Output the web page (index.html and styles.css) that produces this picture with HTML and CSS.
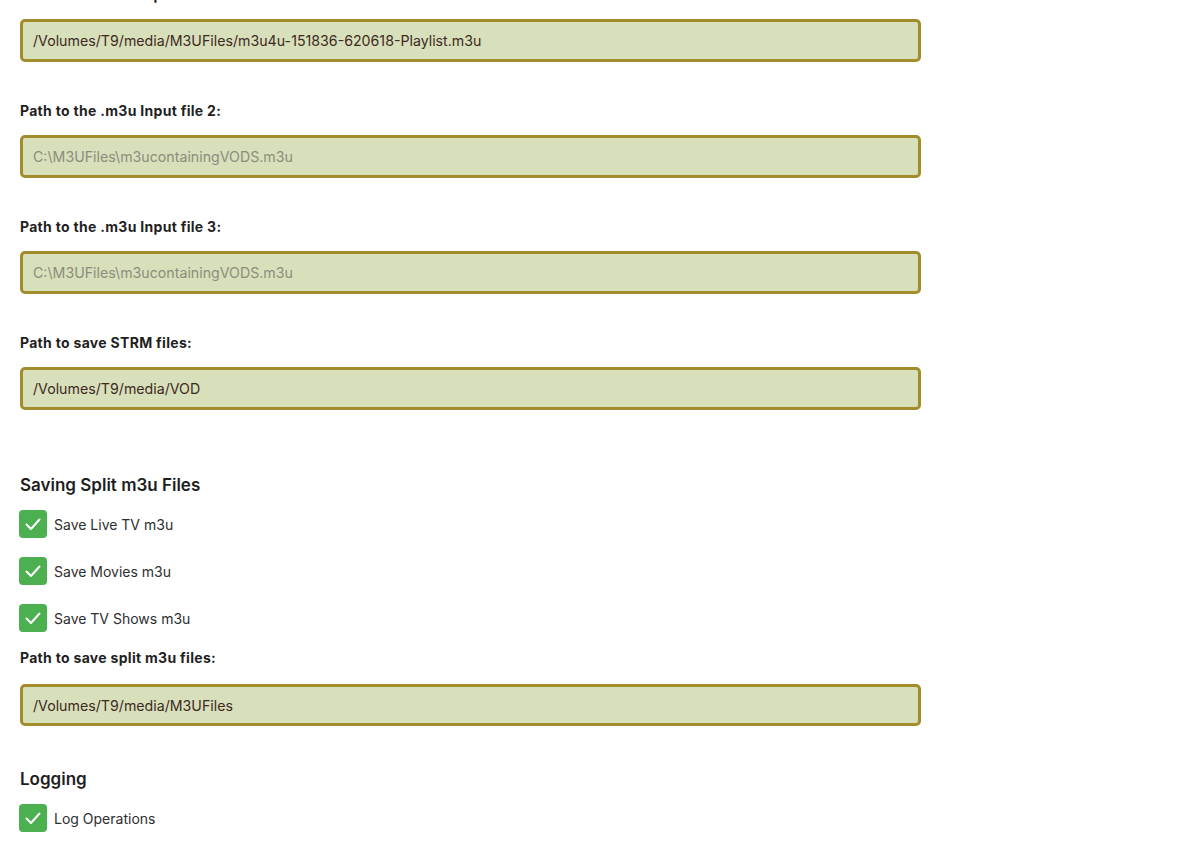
FILE: index.html
```html
<!DOCTYPE html>
<html>
<head>
<meta charset="utf-8">
<link rel="stylesheet" href="styles.css">
</head>
<body>
<div class="form">
  <div class="field first">
    <div class="label">Path to the .m3u Input file 1:</div>
    <div class="input">/Volumes/T9/media/M3UFiles/m3u4u-151836-620618-Playlist.m3u</div>
  </div>
  <div class="field">
    <div class="label">Path to the .m3u Input file 2:</div>
    <div class="input placeholder">C:\M3UFiles\m3ucontainingVODS.m3u</div>
  </div>
  <div class="field">
    <div class="label">Path to the .m3u Input file 3:</div>
    <div class="input placeholder">C:\M3UFiles\m3ucontainingVODS.m3u</div>
  </div>
  <div class="field">
    <div class="label">Path to save STRM files:</div>
    <div class="input">/Volumes/T9/media/VOD</div>
  </div>

  <h2 class="heading h-split">Saving Split m3u Files</h2>
  <div class="checks">
    <div class="check"><span class="box"><svg viewBox="0 0 28 28" width="28" height="28"><path d="M7.5 14.5 L12 19 L20.5 9.5" fill="none" stroke="#fff" stroke-width="2" stroke-linecap="round" stroke-linejoin="round"/></svg></span><span class="ctext">Save Live TV m3u</span></div>
    <div class="check"><span class="box"><svg viewBox="0 0 28 28" width="28" height="28"><path d="M7.5 14.5 L12 19 L20.5 9.5" fill="none" stroke="#fff" stroke-width="2" stroke-linecap="round" stroke-linejoin="round"/></svg></span><span class="ctext">Save Movies m3u</span></div>
    <div class="check"><span class="box"><svg viewBox="0 0 28 28" width="28" height="28"><path d="M7.5 14.5 L12 19 L20.5 9.5" fill="none" stroke="#fff" stroke-width="2" stroke-linecap="round" stroke-linejoin="round"/></svg></span><span class="ctext">Save TV Shows m3u</span></div>
  </div>
  <div class="field split">
    <div class="label">Path to save split m3u files:</div>
    <div class="input short">/Volumes/T9/media/M3UFiles</div>
  </div>

  <h2 class="heading h-log">Logging</h2>
  <div class="checks">
    <div class="check"><span class="box"><svg viewBox="0 0 28 28" width="28" height="28"><path d="M7.5 14.5 L12 19 L20.5 9.5" fill="none" stroke="#fff" stroke-width="2" stroke-linecap="round" stroke-linejoin="round"/></svg></span><span class="ctext">Log Operations</span></div>
  </div>
</div>
</body>
</html>
```

FILE: styles.css
```css
html, body {
  margin: 0;
  padding: 0;
  background: #ffffff;
  overflow: hidden;
}
body {
  font-family: Inter, "Liberation Sans", sans-serif;
  color: #222;
}
.form {
  width: 901px;
  padding-left: 20px;
  margin-top: -15px;
}
.field {
  display: flex;
  flex-direction: column;
  gap: 14px;
  margin-top: 39px;
}
.field.first {
  margin-top: 0;
}
.label {
  font-size: 14px;
  font-weight: 700;
  letter-spacing: 0.3px;
  line-height: 20px;
  height: 20px;
  color: #1f1f1f;
}
.input {
  box-sizing: border-box;
  height: 43px;
  border: 3px solid #a38c2b;
  border-radius: 5px;
  background: #d7dfbb;
  padding-left: 10px;
  display: flex;
  align-items: center;
  font-size: 14.2px;
  color: #3e2a1e;
}
.input.placeholder {
  color: #8c8d7c;
}
.input.short {
  height: 42px;
}
.heading {
  margin: 0;
  font-size: 17px;
  font-weight: 600;
  line-height: 22px;
  color: #1e1e1e;
}
.h-split {
  margin-top: 64px;
}
.h-log {
  margin-top: 42px;
}
.checks {
  display: flex;
  flex-direction: column;
  gap: 19px;
  margin-top: 14px;
}
.check {
  display: flex;
  align-items: center;
  gap: 7px;
  height: 28px;
}
.box {
  width: 28px;
  height: 28px;
  border-radius: 4px;
  background: #4caf50;
  display: flex;
  margin-left: -1px;
}
.ctext {
  font-size: 14px;
  color: #2e2e2e;
}
.field.split {
  margin-top: 16px;
  gap: 16px;
}
```
